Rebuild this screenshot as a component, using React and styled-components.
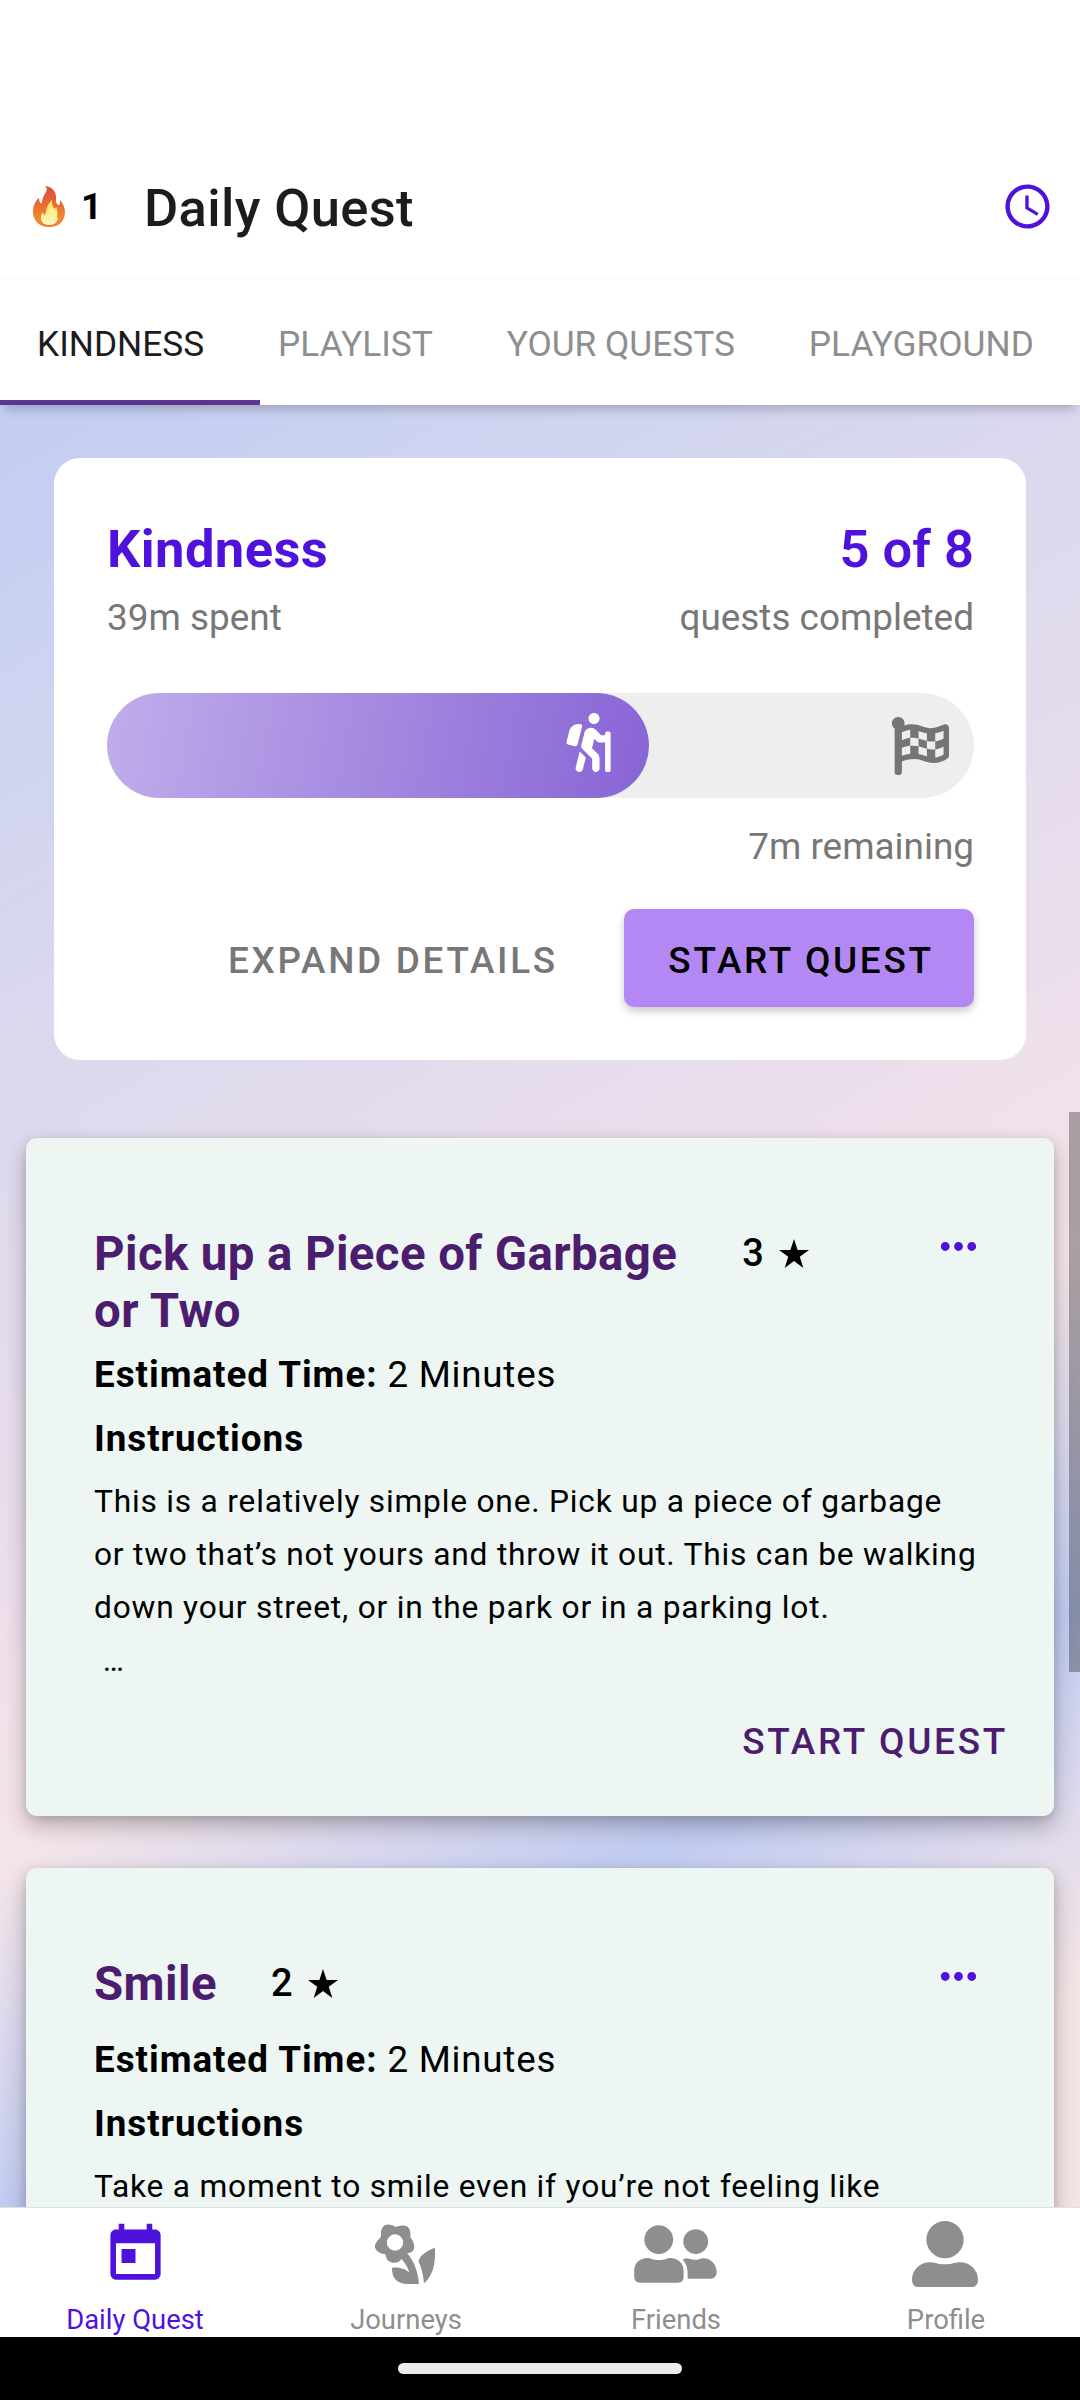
import React from "react";
import styled, { createGlobalStyle } from "styled-components";
import { MdSchedule, MdToday, MdMoreHoriz } from "react-icons/md";
import { FaHiking, FaFlagCheckered } from "react-icons/fa";

const Global = createGlobalStyle`
  * { box-sizing: border-box; }
  body { margin: 0; background: #fff; }
`;

const Screen = styled.div`
  width: 1080px;
  height: 2400px;
  display: flex;
  flex-direction: column;
  overflow: hidden;
  background: #fff;
  font-family: Roboto, "Liberation Sans", sans-serif;
  color: #000;
  white-space: nowrap;
`;

const Header = styled.header`
  height: 279px;
  padding: 134px 26px 0 33px;
  display: flex;
  align-items: center;
`;

const Streak = styled.div`
  display: flex;
  align-items: center;
  gap: 16px;
  width: 111px;
  font-size: 36.75px;
  font-weight: 700;
`;

const Title = styled.h1`
  margin: 2px 0 0;
  flex: 1;
  font-size: 52.5px;
  line-height: 62px;
  font-weight: 500;
  letter-spacing: 0.35px;
  color: #1c1c1e;
`;

const ClockIcon = styled(MdSchedule)`
  width: 53px;
  height: 53px;
  color: #4f12dc;
`;

const Tabs = styled.nav`
  height: 126px;
  flex: none;
  padding: 2px 0 0 37px;
  display: flex;
  align-items: center;
  gap: 73.8px;
  position: relative;
  z-index: 2;
  border-top: 1px solid #fafafa;
  background: #fff;
  box-shadow: 0 8px 10px -4px rgba(0, 0, 0, 0.22);
`;

const Tab = styled.span`
  font-size: 35.3px;
  line-height: 44px;
  color: ${(p) => (p.$active ? "#1c1c1e" : "#8e8e8f")};

  &::after {
    content: "";
    display: ${(p) => (p.$active ? "block" : "none")};
    position: absolute;
    left: 0;
    bottom: 0;
    width: 260px;
    height: 5px;
    background: #5c3493;
  }
`;

const Feed = styled.main`
  height: 1802px;
  flex: none;
  overflow: hidden;
  position: relative;
  padding: 53px 26px 0;
  display: flex;
  flex-direction: column;
  background: linear-gradient(
    150.3deg,
    #c3cef2 30px,
    #d9d8ee 517px,
    #ebdeec 997px,
    #f5e5e9 1264px,
    #c0cbf1 1580px,
    #e3dcec 1777px,
    #f5e4e4 1920px
  );
`;

const ScrollThumb = styled.div`
  position: absolute;
  right: 0;
  top: 707px;
  width: 11px;
  height: 560px;
  background: rgba(0, 0, 0, 0.3);
`;

const ProgressCard = styled.section`
  margin: 0 28px 78px;
  height: 602px;
  flex: none;
  padding: 60px 52px 0 53px;
  border-radius: 26px;
  background: #fff;
`;

const SplitRow = styled.div`
  display: flex;
  justify-content: space-between;
`;

const Stat = styled.div`
  text-align: ${(p) => (p.$end ? "right" : "left")};
`;

const Headline = styled.h2`
  margin: 0 0 13px;
  font-size: 52.5px;
  line-height: 62px;
  letter-spacing: ${(p) => (p.$weight ? 0 : 0.4)}px;
  font-weight: ${(p) => p.$weight || 700};
  color: #4f12dc;
`;

const Muted = styled.div`
  font-size: 36.9px;
  line-height: 50px;
  color: #777;
`;

const Track = styled.div`
  margin: 50px 0 24px;
  height: 105px;
  border-radius: 53px;
  background: #eee;
  display: flex;
  justify-content: space-between;
  align-items: center;
  padding-right: 25px;
  color: #757575;
`;

const Fill = styled.div`
  height: 105px;
  border-radius: 53px;
  padding: 0 31px 6px 0;
  display: flex;
  align-items: center;
  justify-content: flex-end;
  color: #fff;
  background: linear-gradient(100deg, #c0adeb, #8864d5);
`;

const Actions = styled.div`
  margin-top: 37px;
  display: flex;
  justify-content: flex-end;
  gap: 23px;
`;

const Button = styled.button`
  border: 0;
  margin: 0;
  height: 98px;
  padding: 5px 0 0 4px;
  width: ${(p) => p.$width}px;
  border-radius: 10px;
  font: 500 36.9px/50px Roboto, sans-serif;
  letter-spacing: 2.7px;
  color: ${(p) => (p.$filled ? "#000" : "#777")};
  background: ${(p) => (p.$filled ? "#b388f5" : "transparent")};
  box-shadow: ${(p) => (p.$filled ? "0 4px 8px rgba(0,0,0,.22)" : "none")};
`;

const QuestCard = styled.article`
  height: 678px;
  flex: none;
  margin-bottom: 52px;
  padding: 88px 49px 0 68px;
  border-radius: 11px;
  background: #edf6f3;
  box-shadow: 0 10px 22px rgba(0, 0, 0, 0.26), 0 2px 8px rgba(0, 0, 0, 0.1);
  display: flex;
  flex-direction: column;
`;

const QuestTop = styled.div`
  display: flex;
  min-height: 69px;
`;

const QuestName = styled.h3`
  margin: 0 ${(p) => p.$gap}px 0 0;
  font-size: 47.4px;
  line-height: 57px;
  font-weight: 700;
  letter-spacing: 0.4px;
  color: #4c1d6e;
  white-space: pre-line;
`;

const Points = styled.div`
  display: flex;
  align-items: flex-start;
  gap: 15px;
  margin-top: 2px;
  flex: 1;
  font-size: 38px;
  line-height: 50px;
  font-weight: 500;
`;

const Star = styled.svg`
  width: 30px;
  height: 29px;
  margin-top: 11px;
`;

const MoreIcon = styled(MdMoreHoriz)`
  width: 53px;
  height: 53px;
  margin: -6px 20px 0 0;
  color: #4f12dc;
`;

const Line = styled.p`
  margin: ${(p) => p.$top}px 0 0;
  font-size: 36.75px;
  line-height: 50px;
  letter-spacing: 0.76px;

  b {
    letter-spacing: 0.98px;
  }
`;

const Body = styled.p`
  margin: 11px 0 0;
  font-size: 31.7px;
  line-height: 53px;
  letter-spacing: 0.8px;
  white-space: pre-wrap;
`;

const QuestAction = styled.span`
  margin: 30px -3px 0 0;
  align-self: flex-end;
  font-size: 36.9px;
  line-height: 50px;
  font-weight: 500;
  letter-spacing: 2.75px;
  color: #4c1d6e;
`;

const BottomNav = styled.nav`
  height: 130px;
  flex: none;
  display: grid;
  grid-template-columns: repeat(4, 270px);
  border-top: 1px solid #e0e0e0;
  background: #fff;
  position: relative;
`;

const NavItem = styled.div`
  display: flex;
  flex-direction: column;
  align-items: center;
  color: ${(p) => (p.$active ? "#4f12dc" : "#8e8e8f")};
  font-size: 27.4px;
  line-height: 32px;
`;

const NavIcon = styled.div`
  height: 96px;
  display: flex;
  align-items: center;
  justify-content: center;
  padding-bottom: 4px;
`;

const NavLabel = styled.span`
  padding-left: ${(p) => (p.$active ? 0 : 2)}px;
`;

const SystemBar = styled.div`
  height: 63px;
  flex: none;
  display: flex;
  justify-content: center;
  align-items: flex-start;
  padding-top: 26px;
  background: #000;
`;

const Pill = styled.div`
  width: 284px;
  height: 11px;
  border-radius: 6px;
  background: #ebebeb;
`;

function Flame() {
  return (
    <svg width="32" height="41" viewBox="96 81 93 123" preserveAspectRatio="none">
      <defs>
        <linearGradient id="outer" x1="0" y1="0" x2="0" y2="1">
          <stop offset="0" stopColor="#e04a40" />
          <stop offset="0.45" stopColor="#ea6a35" />
          <stop offset="0.8" stopColor="#f08a30" />
          <stop offset="1" stopColor="#ee7a2c" />
        </linearGradient>
        <linearGradient id="inner" x1="0" y1="0" x2="0" y2="1">
          <stop offset="0" stopColor="#fbd95e" />
          <stop offset="0.5" stopColor="#fdf08a" />
          <stop offset="1" stopColor="#fdf6c4" />
        </linearGradient>
      </defs>
      <path
        fill="url(#outer)"
        d="M131 81C152 83 165 99 163 121C162 130 166 138 171 138C175 138 174 131 175 124C183 133 189 145 189 161C188 188 169 204 144 204C116 204 96 186 96 158C96 140 104 125 113 117C115 127 116 133 119 133C124 133 121 119 129 107C137 96 139 88 131 81Z"
      />
      <path
        fill="url(#inner)"
        d="M152 122C150 137 153 143 159 148C161 151 163 146 163 144C168 152 168 165 165 176C167 179 168 176 169 174C168 190 159 198 144 198C128 198 119 190 119 176C119 169 122 163 125 159C126 167 128 170 130 168C136 161 132 139 152 122Z"
      />
    </svg>
  );
}

function FlowerIcon() {
  return (
    <svg width="60" height="60" viewBox="105 72 180 180" fill="currentColor">
      <path
        fillRule="evenodd"
        d="M123 106C121 76 140 65 167 81C196 71 214 76 211 112C227 132 229 157 202 160C219 181 233 207 237 252H205C171 252 155 235 156 203C179 202 195 206 208 218C204 203 197 191 185 177C172 192 155 192 142 179C138 174 138 169 136 163C103 157 95 136 118 116C122 112 123 111 123 106ZM165 103A24.500 24.500 0 1 0 165.100 103Z"
      />
      <path d="M285 143C250 155 235 175 236 185C246 206 250 229 252 250C278 227 287 195 285 143Z" />
    </svg>
  );
}

function FriendsIcon() {
  return (
    <svg width="83" height="58" viewBox="882 75 249 175" fill="currentColor">
      <circle cx="956" cy="119" r="43.500" />
      <circle cx="1067.500" cy="125" r="37.500" />
      <path d="M882 213C882 188 903 172 928 175C941 182 971 182 984 175C1010 172 1031 188 1031 213V232Q1031 249 1014 249H899Q882 249 882 232Z" />
      <path d="M1028 180C1034 174 1043 174 1048 177C1060 181 1074 181 1085 176C1108 172 1131 192 1131 217Q1130 237 1112 237H1043C1044 212 1043 196 1028 180Z" />
    </svg>
  );
}

function ProfileIcon() {
  return (
    <svg width="66" height="66" viewBox="0 0 198 198" fill="currentColor">
      <circle cx="99" cy="56" r="56" />
      <path d="M0 176C0 146 26 122 58 124C70 125 76 130 99 130C122 130 128 125 140 124C172 122 198 146 198 176Q198 198 178 198H20Q0 198 0 176Z" />
    </svg>
  );
}

function Quest({ name, gap, points, body, action }) {
  return (
    <QuestCard>
      <QuestTop>
        <QuestName $gap={gap}>{name}</QuestName>
        <Points>
          {points}
          <Star viewBox="0 0 30 29">
            <path d="M15 0L18.600 11H30L20.800 17.800L24.300 29L15 22.100L5.700 29L9.200 17.800L0 11H11.400Z" />
          </Star>
        </Points>
        <MoreIcon />
      </QuestTop>
      <Line $top={10}>
        <b>Estimated Time:</b> 2 Minutes
      </Line>
      <Line $top={14}>
        <b>Instructions</b>
      </Line>
      <Body>{body}</Body>
      {action && <QuestAction>{action}</QuestAction>}
    </QuestCard>
  );
}

const quests = [
  {
    name: "Pick up a Piece of Garbage\nor Two",
    gap: 65,
    points: 3,
    body:
      "This is a relatively simple one. Pick up a piece of garbage\nor two that’s not yours and throw it out. This can be walking\ndown your street, or in the park or in a parking lot.\n …",
    action: "START QUEST",
  },
  {
    name: "Smile",
    gap: 54,
    points: 2,
    body: "Take a moment to smile even if you’re not feeling like",
  },
];

const destinations = [
  { label: "Daily Quest", icon: <MdToday size={67} />, active: true },
  { label: "Journeys", icon: <FlowerIcon /> },
  { label: "Friends", icon: <FriendsIcon /> },
  { label: "Profile", icon: <ProfileIcon /> },
];

export default function App() {
  const progress = 5 / 8;
  return (
    <Screen>
      <Global />
      <Header>
        <Streak>
          <Flame />
          <span>1</span>
        </Streak>
        <Title>Daily Quest</Title>
        <ClockIcon />
      </Header>
      <Tabs>
        <Tab $active>KINDNESS</Tab>
        <Tab>PLAYLIST</Tab>
        <Tab>YOUR QUESTS</Tab>
        <Tab>PLAYGROUND</Tab>
      </Tabs>
      <Feed>
        <ProgressCard>
          <SplitRow>
            <Stat>
              <Headline>Kindness</Headline>
              <Muted>39m spent</Muted>
            </Stat>
            <Stat $end>
              <Headline as="div" $weight={600}>
                5 of 8
              </Headline>
              <Muted>quests completed</Muted>
            </Stat>
          </SplitRow>
          <Track>
            <Fill style={{ width: progress * 867 }}>
              <FaHiking size={59} />
            </Fill>
            <FaFlagCheckered size={58} />
          </Track>
          <Stat $end>
            <Muted>7m remaining</Muted>
          </Stat>
          <Actions>
            <Button $width={420}>EXPAND DETAILS</Button>
            <Button $filled $width={350}>START QUEST</Button>
          </Actions>
        </ProgressCard>
        {quests.map((q) => (
          <Quest key={q.name} {...q} />
        ))}
        <ScrollThumb />
      </Feed>
      <BottomNav>
        {destinations.map((d) => (
          <NavItem key={d.label} $active={d.active}>
            <NavIcon>{d.icon}</NavIcon>
            <NavLabel $active={d.active}>{d.label}</NavLabel>
          </NavItem>
        ))}
      </BottomNav>
      <SystemBar>
        <Pill />
      </SystemBar>
    </Screen>
  );
}
